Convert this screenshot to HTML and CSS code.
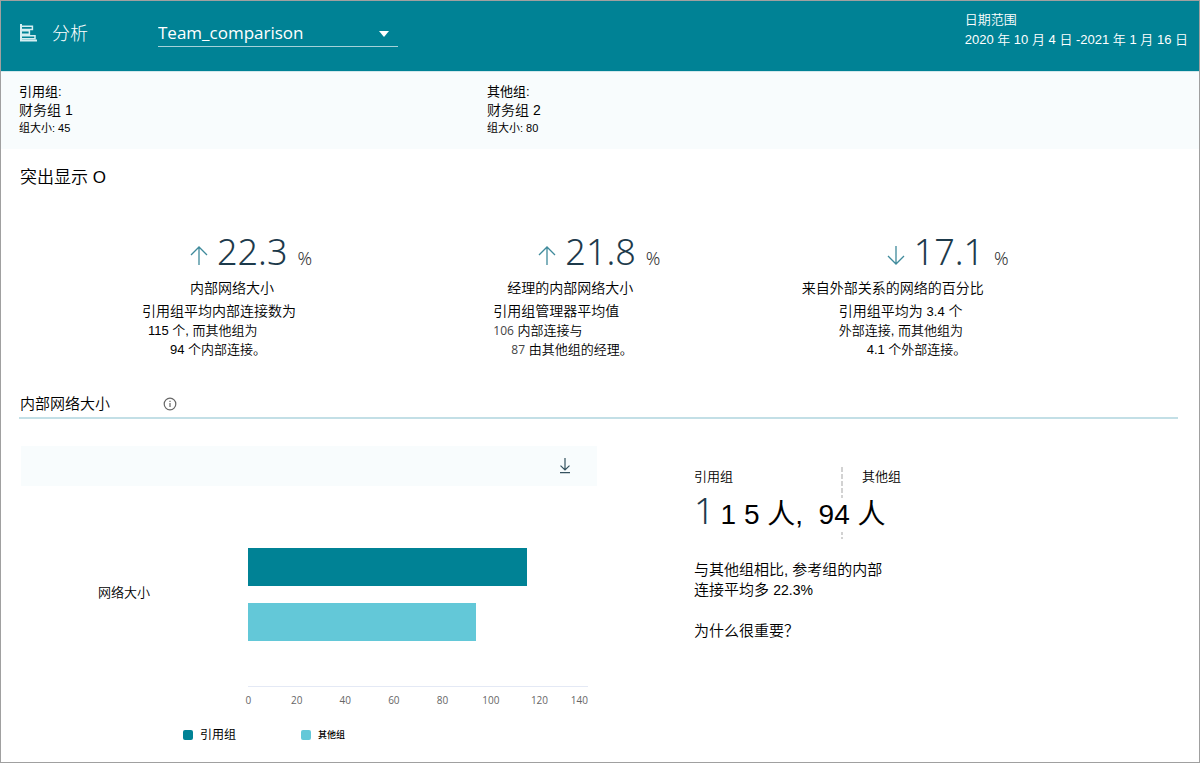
FILE: index.html
```html
<!DOCTYPE html>
<html lang="zh-CN">
<head>
<meta charset="utf-8">
<meta name="viewport" content="width=device-width, initial-scale=1">
<title>分析</title>
<link rel="stylesheet" href="styles.css">
</head>
<body>
<div class="app">
  <header class="topbar">
    <svg class="logo" viewBox="0 0 18 18" width="18" height="18" fill="none" stroke="currentColor" aria-hidden="true">
      <path d="M1 0v16.500h16" stroke-width="2"/>
      <path d="M2 2.200h10.400v3.200H2M2 6.800h7.400v3.400H2M2 11.700h13v3H2" stroke-width="1.500"/>
    </svg>
    <h1 class="app-title">分析</h1>
    <div class="picker">
      <select class="picker-select" aria-label="分析">
        <option>Team_comparison</option>
      </select>
      <svg class="picker-arrow" viewBox="0 0 10 6" width="10" height="6" aria-hidden="true"><path d="M0 0h10L5 6z" fill="currentColor"/></svg>
    </div>
    <div class="dates">
      <div>日期范围</div>
      <div>2020 年 10 月 4 日 -2021 年 1 月 16 日</div>
    </div>
  </header>

  <section class="groups">
    <div class="group">
      <div class="group-label">引用组:</div>
      <div class="group-name">财务组 1</div>
      <div class="group-size">组大小: 45</div>
    </div>
    <div class="group">
      <div class="group-label">其他组:</div>
      <div class="group-name">财务组 2</div>
      <div class="group-size">组大小: 80</div>
    </div>
  </section>

  <main>
    <h2 class="highlights-title">突出显示 O</h2>
    <section class="kpis">
      <article class="kpi kpi-internal">
        <div class="kpi-value">
          <svg class="trend" viewBox="0 0 18 20" width="18" height="20" aria-hidden="true"><path d="M9 20V2M1 10l8-8 8 8"/></svg>
          <span class="kpi-number">22.3</span><span class="kpi-unit">%</span>
        </div>
        <h3 class="kpi-title">内部网络大小</h3>
        <p class="kpi-text">
          <span class="line line-first">引用组平均内部连接数为</span>
          <span class="line line-second">115 个, 而其他组为</span>
          <span class="line line-last">94 个内部连接。</span>
        </p>
      </article>
      <article class="kpi kpi-manager">
        <div class="kpi-value">
          <svg class="trend" viewBox="0 0 18 20" width="18" height="20" aria-hidden="true"><path d="M9 20V2M1 10l8-8 8 8"/></svg>
          <span class="kpi-number">21.8</span><span class="kpi-unit">%</span>
        </div>
        <h3 class="kpi-title">经理的内部网络大小</h3>
        <p class="kpi-text">
          <span class="line line-first">引用组管理器平均值</span>
          <span class="line line-second"><span class="soft">106</span> 内部连接与</span>
          <span class="line line-last"><span class="soft">87</span> 由其他组的经理。</span>
        </p>
      </article>
      <article class="kpi kpi-external">
        <div class="kpi-value">
          <svg class="trend" viewBox="0 0 18 20" width="18" height="20" aria-hidden="true"><path d="M9 1v18M1 11l8 8 8-8"/></svg>
          <span class="kpi-number">17.1</span><span class="kpi-unit">%</span>
        </div>
        <h3 class="kpi-title">来自外部关系的网络的百分比</h3>
        <p class="kpi-text">
          <span class="line line-first">引用组平均为 <span class="num">3.4</span> 个</span>
          <span class="line line-second">外部连接, 而其他组为</span>
          <span class="line line-last">4.1 个外部连接。</span>
        </p>
      </article>
    </section>

    <section class="network">
      <div class="network-head">
        <h2 class="network-title">内部网络大小</h2>
        <button class="icon-button" type="button" aria-label="信息">
          <svg viewBox="0 0 14 14" width="14" height="14" fill="none" stroke="currentColor" aria-hidden="true"><circle cx="7" cy="7" r="5.800" stroke-width="1.200"/><path d="M7 6v4M7 3.800v1.200" stroke-width="1.200"/></svg>
        </button>
      </div>
      <div class="network-body">
        <div class="chart">
          <div class="chart-bar">
            <button class="icon-button download" type="button" aria-label="下载">
              <svg viewBox="0 0 12 16" width="12" height="16" fill="none" stroke="currentColor" stroke-width="1.200" aria-hidden="true"><path d="M6 0v12M1.500 7.600L6 12l4.500-4.400M1 14.600h10"/></svg>
            </button>
          </div>
          <div class="chart-area">
            <div class="category">网络大小</div>
            <div class="plot">
              <div class="bars">
                <div class="bar bar-reference" style="width:82.14%"></div>
                <div class="bar bar-other" style="width:67.14%"></div>
              </div>
              <div class="ticks">
                <span>0</span><span>20</span><span>40</span><span>60</span><span>80</span><span>100</span><span>120</span><span class="tick-end">140</span>
              </div>
            </div>
          </div>
          <div class="legend">
            <div class="legend-item"><i class="swatch swatch-reference"></i><span>引用组</span></div>
            <div class="legend-item"><i class="swatch swatch-other"></i><span class="legend-small">其他组</span></div>
          </div>
        </div>
        <div class="summary">
          <div class="compare">
            <div class="compare-labels"><span>引用组</span><span>其他组</span></div>
            <div class="compare-values"><span class="lead-digit">1</span>1 5 人, &nbsp;94 人</div>
          </div>
          <p class="summary-text">与其他组相比, 参考组的内部<br>连接平均多 <span class="percent">22.3%</span></p>
          <p class="summary-text">为什么很重要？</p>
        </div>
      </div>
    </section>
  </main>
</div>
</body>
</html>
```

FILE: styles.css
```css
* {
  box-sizing: border-box;
}

body {
  margin: 0;
  background: #fff;
  color: #000;
  font-family: "Liberation Sans", "Noto Sans CJK SC", sans-serif;
  font-size: 13px;
  font-weight: 350;
}

h1, h2, h3, p {
  margin: 0;
  font-weight: 350;
}

.app {
  min-height: 100vh;
  border: 1px solid #a0a0a0;
}

/* Header */
.topbar {
  display: flex;
  align-items: flex-start;
  height: 70px;
  padding: 0 11px 0 19px;
  background: #008295;
  color: #fff;
}

.logo {
  margin-top: 23px;
  color: #d5eef2;
}

.app-title {
  width: 106px;
  margin: 20px 0 0 14px;
  font-size: 18px;
  font-weight: 300;
  line-height: 26px;
}

.picker {
  position: relative;
  width: 240px;
  margin-top: 18px;
}

.picker-select {
  display: block;
  width: 100%;
  height: 28px;
  padding: 0 24px 0 0;
  border: 0;
  border-bottom: 1px solid #a5d2d9;
  border-radius: 0;
  background: transparent;
  color: #fff;
  font-family: "Open Sans", "Noto Sans", sans-serif;
  font-size: 17px;
  font-weight: 400;
  line-height: 26px;
  appearance: none;
}

.picker-arrow {
  position: absolute;
  right: 9px;
  top: 12px;
  pointer-events: none;
}

.dates {
  margin-left: auto;
  padding-top: 9px;
  line-height: 20px;
}

/* Compared groups */
.groups {
  display: grid;
  grid-template-columns: 468px 1fr;
  padding: 12px 18px 13px;
  border-top: 1px solid #d3e8ec;
  background: #f8fcfd;
}

.group-label {
  font-weight: 400;
  line-height: 16px;
}

.group-name {
  font-size: 14px;
  line-height: 20px;
}

.group-size {
  font-size: 11px;
  font-weight: 400;
  line-height: 16px;
}

/* Highlights */
.highlights-title {
  padding: 17px 19px 0;
  font-size: 17px;
  line-height: 24px;
}

.kpis {
  display: grid;
  grid-template-columns: repeat(3, 1fr);
  padding: 42px 62px 0 91px;
}

.kpi {
  --title-indent: 98px;
  --text-indent: 50px;
  --second-indent: 0px;
  --last-indent: 28px;
}

.kpi-internal {
  --second-indent: 6px;
}

.kpi-manager {
  --title-indent: 67px;
  --text-indent: 53px;
  --last-indent: 18px;
}

.kpi-external {
  --title-indent: 13px;
}

.kpi-value {
  display: flex;
  align-items: baseline;
  padding-left: 98px;
  color: #1d3a4b;
  font-family: "Noto Sans", "Open Sans", sans-serif;
  line-height: 40px;
}

.trend {
  fill: none;
  stroke: #3f8a9b;
  stroke-width: 1.3;
}

.kpi-number {
  margin-left: 9px;
  font-size: 36px;
}

.kpi-unit {
  margin-left: 10px;
  color: #333;
  font-size: 18px;
}

.kpi-title {
  padding: 0 0 4px var(--title-indent);
  font-size: 14px;
  line-height: 20px;
}

.kpi-text {
  padding-left: var(--text-indent);
}

.line {
  display: block;
  line-height: 19px;
}

.line-first {
  font-size: 14px;
}

.line-second {
  padding-left: var(--second-indent);
}

.line-last {
  padding-left: var(--last-indent);
}

.num {
  font-size: 13px;
}

.soft {
  color: #444;
  font-family: "Open Sans", "Noto Sans", sans-serif;
  font-size: 12px;
  font-weight: 400;
}

/* Network size */
.network {
  padding: 34px 21px 12px 18px;
}

.network-head {
  display: flex;
  align-items: center;
  gap: 53px;
  height: 26px;
  padding: 0 0 2px 1px;
  border-bottom: 2px solid #c3dfe6;
}

.network-title {
  font-size: 15px;
  line-height: 22px;
}

.icon-button {
  display: flex;
  padding: 0;
  border: 0;
  background: none;
  color: #666;
  cursor: pointer;
}

.network-body {
  display: grid;
  grid-template-columns: 578px 1fr;
  column-gap: 97px;
  padding-top: 27px;
}

.chart-bar {
  display: flex;
  align-items: center;
  justify-content: flex-end;
  height: 40px;
  margin-left: 2px;
  padding-right: 26px;
  background: #f8fcfd;
}

.download {
  color: #35525f;
}

.chart-area {
  display: grid;
  grid-template-columns: 150px 1fr;
  padding: 62px 9px 0 79px;
}

.category {
  padding-top: 35px;
  line-height: 20px;
}

.bars {
  display: flex;
  flex-direction: column;
  gap: 17px;
  height: 139px;
  border-bottom: 1px solid #e4e9f5;
}

.bar {
  height: 38px;
}

.bar-reference,
.swatch-reference {
  background: #008295;
}

.bar-other,
.swatch-other {
  background: #63c8d8;
}

.ticks {
  display: grid;
  grid-template-columns: repeat(7, 2fr) 1fr;
  margin-left: -24px;
  padding-top: 5px;
  color: #666;
  font-family: "Open Sans", "Noto Sans", sans-serif;
  font-size: 10px;
  font-weight: 400;
  line-height: 16px;
  text-align: center;
}

.tick-end {
  text-align: right;
}

.legend {
  display: grid;
  grid-template-columns: 118px 1fr;
  padding: 18px 0 0 164px;
}

.legend-item {
  display: flex;
  align-items: center;
  gap: 7px;
  font-size: 12px;
  font-weight: 400;
  line-height: 18px;
}

.legend-small {
  font-size: 9px;
  font-weight: 500;
}

.swatch {
  width: 10px;
  height: 10px;
  border-radius: 2px;
}

/* Summary */
.summary {
  padding-top: 21px;
}

.compare {
  position: relative;
  height: 72px;
}

.compare::before {
  content: "";
  position: absolute;
  left: 147px;
  top: 0;
  width: 2px;
  height: 72px;
  background: repeating-linear-gradient(#d2d2d2 0 5px, transparent 5px 7px);
}

.compare-labels {
  display: grid;
  grid-template-columns: 168px 1fr;
  line-height: 20px;
}

.compare-values {
  position: relative;
  width: fit-content;
  margin-top: 11px;
  background: #fff;
  font-size: 28px;
  font-weight: 400;
  line-height: 34px;
  white-space: nowrap;
}

.lead-digit {
  margin-right: 6px;
  color: #1d3a4b;
  font-family: "Noto Sans", "Open Sans", sans-serif;
  font-size: 36px;
  font-weight: 350;
  line-height: 1px;
}

.summary-text {
  margin-top: 21px;
  font-size: 15px;
  line-height: 20px;
}

.percent {
  font-size: 14px;
}
```
